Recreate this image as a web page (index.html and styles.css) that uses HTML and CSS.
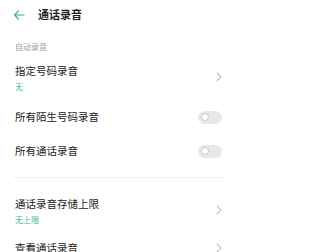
FILE: index.html
```html
<!DOCTYPE html>
<html lang="zh">
<head>
<meta charset="utf-8">
<link rel="stylesheet" href="styles.css">
</head>
<body>
<div class="page">
  <header class="topbar">
    <svg class="back" width="12" height="10" viewBox="0 0 12 10"><path d="M11 5H1.5M5.5 1L1.5 5L5.5 9" fill="none" stroke="#39b38d" stroke-width="1.1" stroke-linecap="round" stroke-linejoin="round"/></svg>
    <h1 class="title">通话录音</h1>
  </header>
  <div class="section-label">自动录音</div>
  <div class="row row-two">
    <div class="texts">
      <div class="main">指定号码录音</div>
      <div class="sub">无</div>
    </div>
    <svg class="chev" width="6" height="10" viewBox="0 0 6 10"><path d="M1 1L5 5L1 9" fill="none" stroke="#c4c4c4" stroke-width="1.1" stroke-linecap="round" stroke-linejoin="round"/></svg>
  </div>
  <div class="row row-one">
    <div class="main">所有陌生号码录音</div>
    <span class="toggle"><span class="knob"></span></span>
  </div>
  <div class="row row-one">
    <div class="main">所有通话录音</div>
    <span class="toggle"><span class="knob"></span></span>
  </div>
  <div class="divider"></div>
  <div class="row row-two">
    <div class="texts">
      <div class="main">通话录音存储上限</div>
      <div class="sub">无上限</div>
    </div>
    <svg class="chev" width="6" height="10" viewBox="0 0 6 10"><path d="M1 1L5 5L1 9" fill="none" stroke="#c4c4c4" stroke-width="1.1" stroke-linecap="round" stroke-linejoin="round"/></svg>
  </div>
  <div class="row row-last">
    <div class="main">查看通话录音</div>
    <svg class="chev" width="6" height="10" viewBox="0 0 6 10"><path d="M1 1L5 5L1 9" fill="none" stroke="#c4c4c4" stroke-width="1.1" stroke-linecap="round" stroke-linejoin="round"/></svg>
  </div>
</div>
</body>
</html>
```
FILE: styles.css
```css
html, body {
  margin: 0;
  padding: 0;
  background: #ffffff;
}
body {
  font-family: "Noto Sans CJK SC", "Noto Sans", sans-serif;
  color: #222222;
  width: 233px;
  height: 252px;
  overflow: hidden;
}
.page {
  display: flex;
  flex-direction: column;
}
.topbar {
  display: flex;
  align-items: center;
  height: 29px;
  padding-left: 13px;
}
.back {
  display: block;
}
.title {
  margin: 0 0 0 13px;
  font-size: 11px;
  font-weight: 700;
  line-height: 29px;
  color: #1f1f1f;
}
.section-label {
  margin-top: 11px;
  padding-left: 15px;
  font-size: 8px;
  line-height: 14px;
  color: #9a9a9a;
}
.row {
  display: flex;
  align-items: center;
  justify-content: space-between;
  padding: 0 11px 0 15px;
}
.row-two {
  height: 46px;
}
.row-one {
  height: 34px;
}
.row-last {
  height: 30px;
}
.texts {
  display: flex;
  flex-direction: column;
  padding-top: 2px;
}
.main {
  font-size: 10.5px;
  line-height: 16px;
  color: #222222;
}
.sub {
  margin-top: 1px;
  font-size: 8px;
  line-height: 13px;
  color: #3cb88f;
}
.chev {
  display: block;
}
.toggle {
  position: relative;
  display: block;
  width: 24px;
  height: 13px;
  border-radius: 7px;
  background: #e8e8e8;
}
.knob {
  position: absolute;
  left: 2.5px;
  top: 2.3px;
  width: 6px;
  height: 6px;
  border-radius: 50%;
  border: 1.2px solid #c8c8c8;
  background: #ffffff;
}
.divider {
  height: 1px;
  margin: 9px 10px 9px 13px;
  background: #efefef;
}
```
